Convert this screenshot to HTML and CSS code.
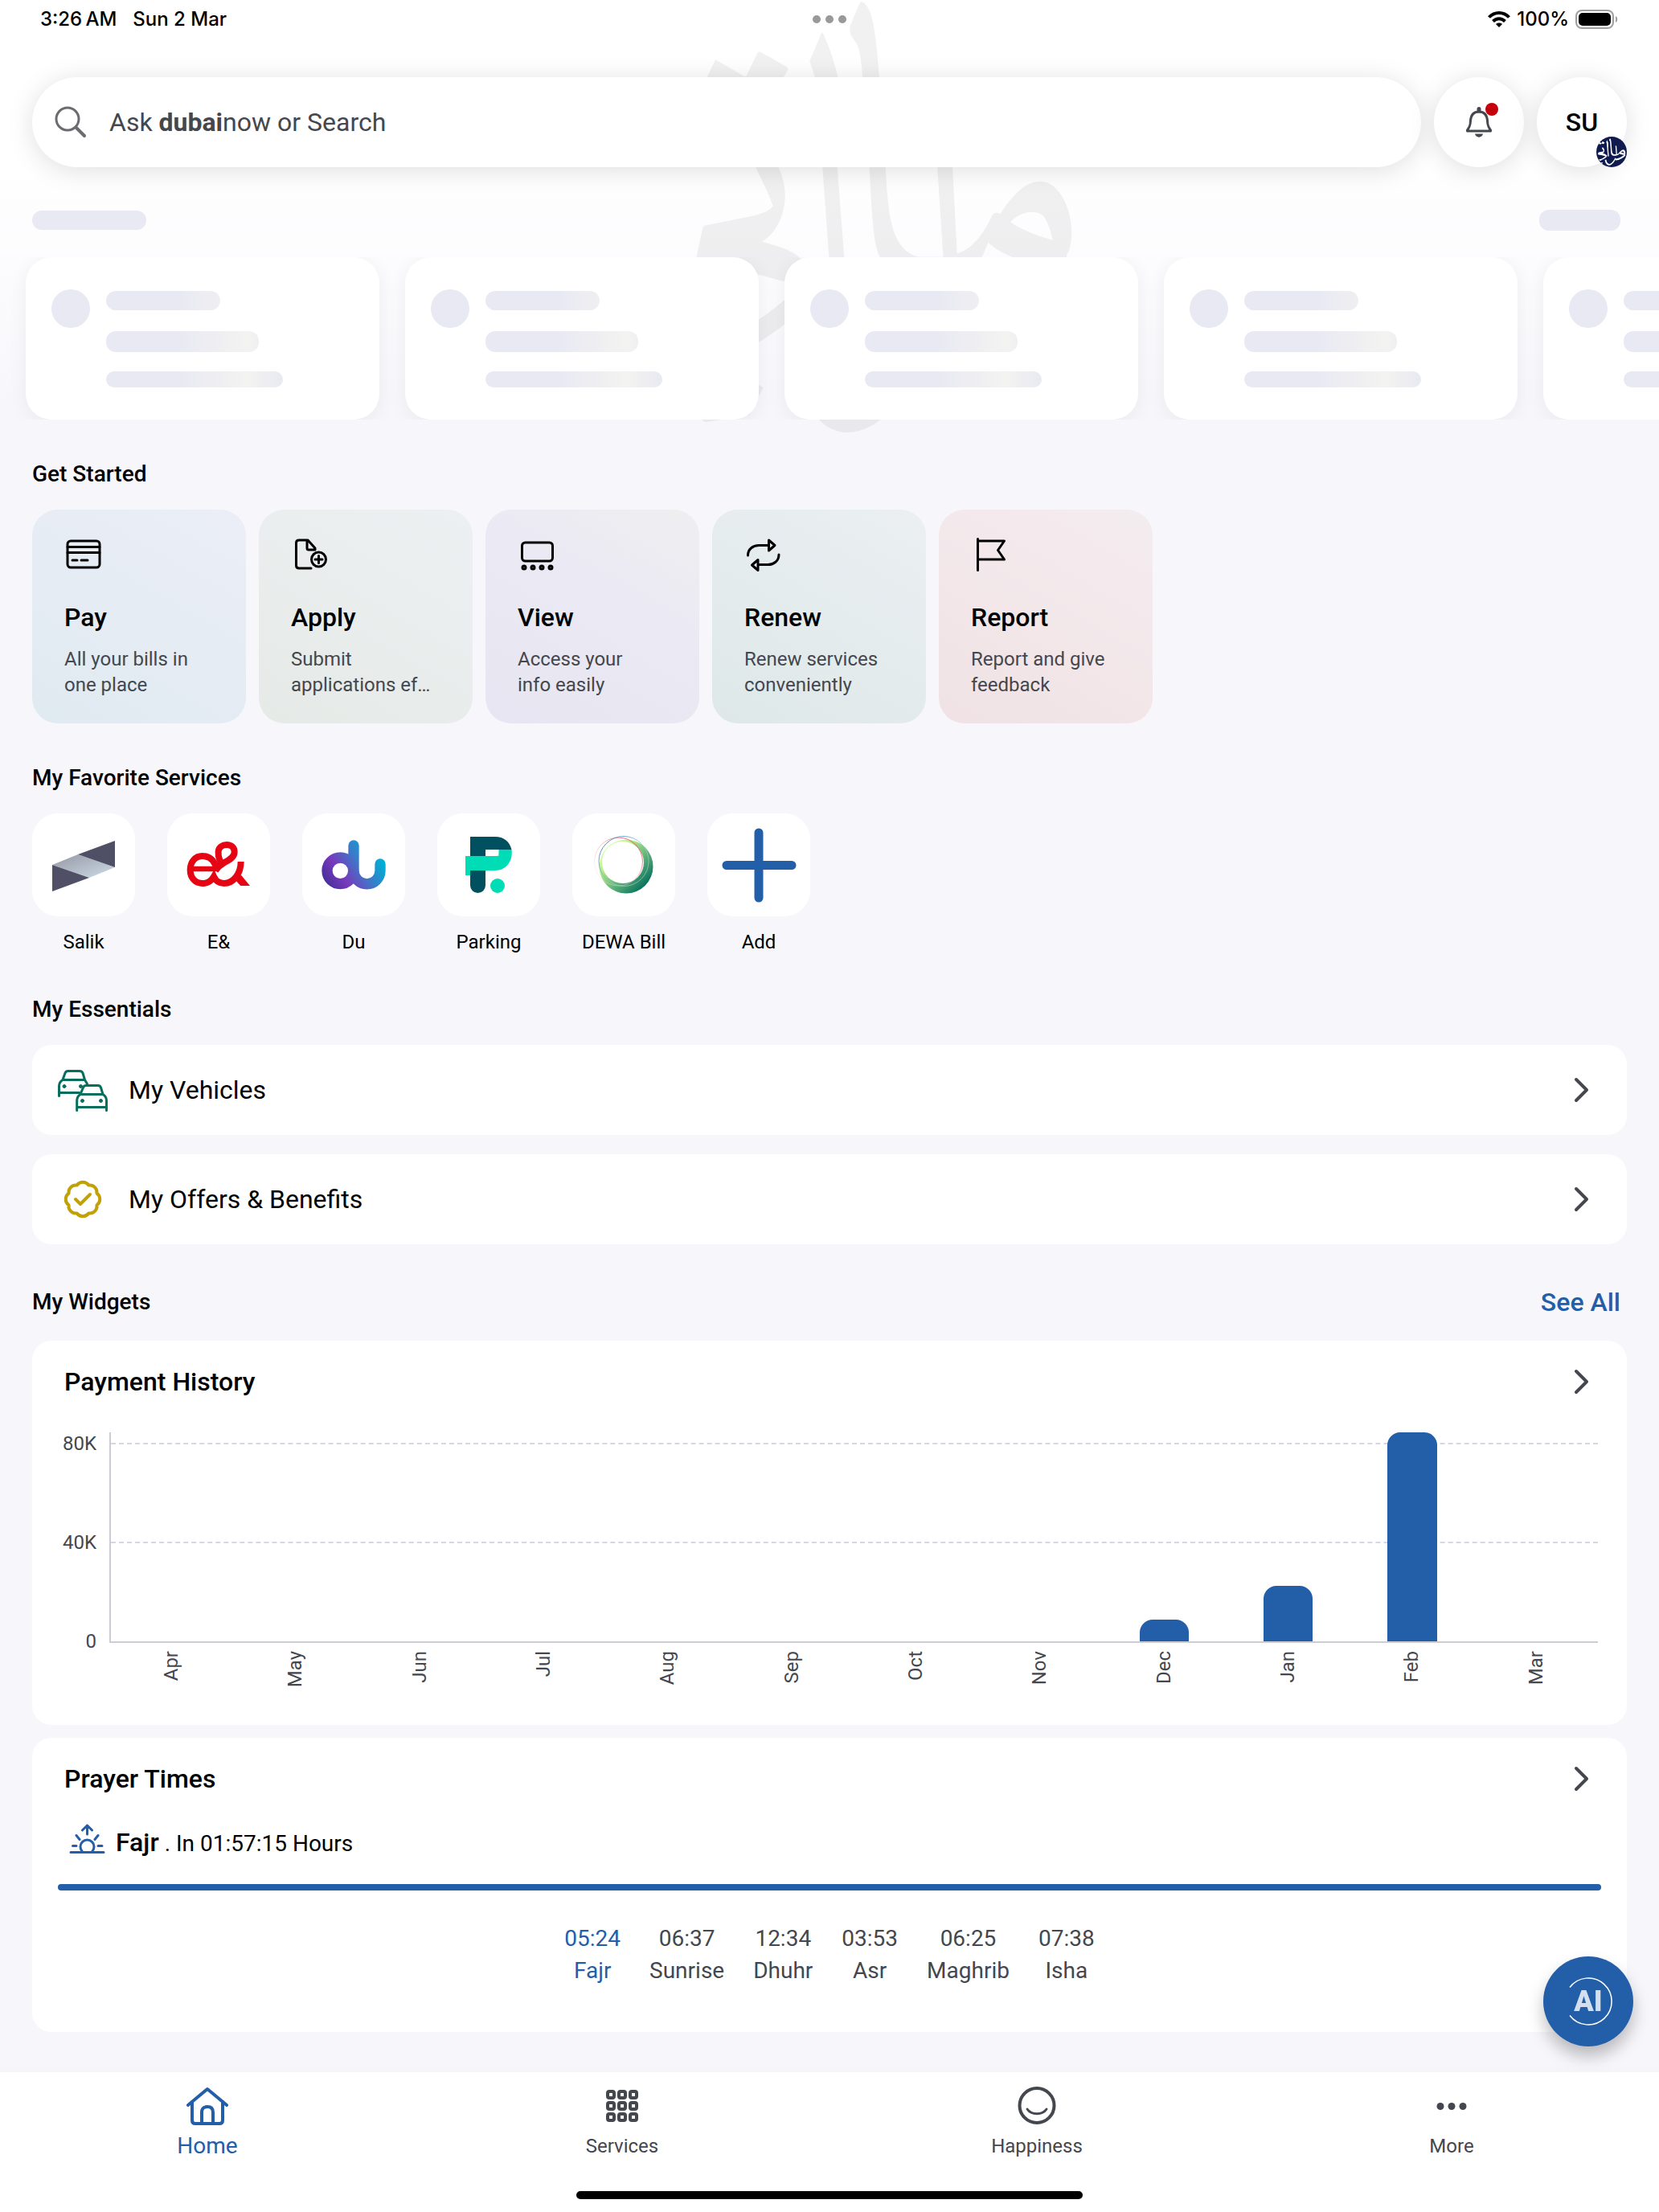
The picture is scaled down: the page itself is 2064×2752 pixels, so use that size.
FILE: index.html
```html
<!DOCTYPE html>
<html lang="en">
<head>
    <meta charset="UTF-8">
    <meta name="viewport" content="width=device-width, initial-scale=1.0">
    <title>Dubai Now</title>
    <link rel="stylesheet" href="styles.css">
</head>
<body>

    <!-- shared symbols -->
    <svg class="symbols" aria-hidden="true">
        <symbol id="maliati" viewBox="180 0 1200 1520" preserveAspectRatio="none">
            <path d="M271 208L358 265Q364 268 367 260L398 186Q402 177 410 182L488 233Q494 238 490 246L450 325L362 285L320 345L232 300Z"/>
            <path d="M594 115Q598 112 601 122C620 170 635 225 644 269L642 582L663 895L670 1010L622 1010L617 895L597 582L574 269L558 212Z"/>
            <path d="M712 7C725 3 742 30 750 75C762 140 766 220 770 269L789 582C795 700 800 780 825 835C845 875 870 893 895 895L965 895L947 582L940 400L985 440L993 582L1007 883C1050 870 1085 820 1110 760Q1120 730 1138 746C1170 690 1210 632 1260 632C1320 632 1356 730 1356 810C1356 850 1348 880 1338 895C1320 940 1240 930 1175 895C1150 885 1120 865 1102 845L1083 895C1050 960 900 990 850 970C810 960 785 930 772 895C752 850 748 760 740 582L719 269C716 210 710 170 700 150C688 130 678 120 681 90Z
                     M1170 773C1200 800 1260 825 1299 836C1295 815 1282 765 1268 750C1245 730 1200 735 1170 773Z" fill-rule="evenodd"/>
            <path d="M370 530C410 620 440 690 446 718C430 740 400 748 380 753L240 785Q234 787 232 795L213 895L240 920C300 925 400 955 480 980L560 1000L600 950L530 900C505 870 450 853 412 842C460 810 483 740 483 680C483 640 472 605 463 582L430 510Z"/>
            <path d="M250 1180C340 1170 440 1100 540 980L600 1010C520 1110 400 1200 300 1260Z"/>
            <path d="M400 1338L416 1350L375 1445L240 1470L200 1440L300 1360Z"/>
            <path d="M500 1200C520 1420 600 1506 672 1506C790 1506 900 1320 960 1120L920 1100C860 1280 780 1420 690 1430C620 1430 580 1350 560 1200Z"/>
            <path d="M940 1140C1080 1120 1220 1040 1338 880L1356 960C1260 1110 1120 1210 950 1230Z"/>
        </symbol>
        <symbol id="chevron" viewBox="0 0 48 48">
            <path d="M17 11L30 24L17 37" fill="none" stroke="#44474e" stroke-width="4" stroke-linecap="round" stroke-linejoin="round"/>
        </symbol>
    </svg>

    <div class="page">

        <svg class="watermark" aria-hidden="true"><use href="#maliati"/></svg>

        <div class="status-bar">
            <div class="status-left"><span>3:26&#8201;AM</span><span>Sun 2 Mar</span></div>
            <div class="status-dots"><i></i><i></i><i></i></div>
            <div class="status-right">
                <svg width="28" height="22" viewBox="0 0 28 22">
                    <g fill="none" stroke="#000" stroke-width="4">
                        <path d="M1.500 8.500C8.500 1 19.500 1 26.500 8.500"/>
                        <path d="M6.500 13.500C11 9 17 9 21.500 13.500"/>
                    </g>
                    <path d="M14 21L10 17C12 15 16 15 18 17Z"/>
                </svg>
                <span>100%</span>
                <svg width="54" height="24" viewBox="0 0 54 24">
                    <rect x="1" y="1" width="46" height="22" rx="7" fill="none" stroke="#a0a0a0" stroke-width="2"/>
                    <rect x="4" y="4" width="40" height="16" rx="5"/>
                    <path d="M50 8C53 9 53 15 50 16Z" fill="#a0a0a0"/>
                </svg>
            </div>
        </div>

        <header class="topbar">
            <form class="search">
                <svg width="48" height="48" viewBox="0 0 48 48" fill="none" stroke="#6b6c70" stroke-linecap="round">
                    <circle cx="20" cy="20" r="14" stroke-width="3"/>
                    <path d="M31 31L41 41" stroke-width="4"/>
                </svg>
                <div class="search-field">
                    <label for="search">Ask <b>dubai</b>now or Search</label>
                    <input type="text" id="search">
                </div>
            </form>
            <button class="round-button" aria-label="Notifications">
                <svg width="48" height="48" viewBox="0 0 48 48" fill="none" stroke="#44474e" stroke-width="3" stroke-linecap="round" stroke-linejoin="round">
                    <path d="M24 11C16.500 11 14 16 13.500 22C13.300 28 12.500 30 9.500 34V35H38.500V34C35.500 30 34.700 28 34.500 22C34 16 31.500 11 24 11Z"/>
                    <path d="M24 7.500V10" stroke-width="5"/>
                    <path d="M19 38.500H29C28 44 20 44 19 38.500Z" fill="#44474e" stroke="none"/>
                </svg>
                <span class="dot"></span>
            </button>
            <button class="round-button" aria-label="Profile">
                SU
                <span class="badge"><svg><use href="#maliati"/></svg></span>
            </button>
        </header>

        <div class="skeleton-head">
            <span class="bone bone-title"></span>
            <span class="bone bone-link"></span>
        </div>
        <div class="skeleton-cards">
            <div class="skeleton-card"><span class="bone-circle"></span><div class="bone-lines"><i></i><i></i><i></i></div></div>
            <div class="skeleton-card"><span class="bone-circle"></span><div class="bone-lines"><i></i><i></i><i></i></div></div>
            <div class="skeleton-card"><span class="bone-circle"></span><div class="bone-lines"><i></i><i></i><i></i></div></div>
            <div class="skeleton-card"><span class="bone-circle"></span><div class="bone-lines"><i></i><i></i><i></i></div></div>
            <div class="skeleton-card"><span class="bone-circle"></span><div class="bone-lines"><i></i><i></i><i></i></div></div>
        </div>

        <main>
            <section>
                <h2>Get Started</h2>
                <div class="actions">
                    <a href="#" class="action pay">
                        <svg viewBox="0 0 48 48">
                            <rect x="4" y="7" width="40" height="33" rx="4"/>
                            <path d="M4 14.500H44M4 21.500H44M10 31H16M21 31H29"/>
                        </svg>
                        <h3>Pay</h3>
                        <p>All your bills in<br>one place</p>
                    </a>
                    <a href="#" class="action apply">
                        <svg viewBox="0 0 48 48">
                            <path d="M25 41H10Q6.500 41 6.500 37.500V9.500Q6.500 6 10 6H21L30 16V18H22Q20 18 20 16V6"/>
                            <circle cx="34.500" cy="30" r="9"/>
                            <path d="M34.500 25.500V34.500M30 30H39"/>
                        </svg>
                        <h3>Apply</h3>
                        <p>Submit<br>applications ef…</p>
                    </a>
                    <a href="#" class="action view">
                        <svg viewBox="0 0 48 48">
                            <rect x="5.500" y="9" width="38" height="23" rx="4"/>
                            <circle cx="8" cy="40" r="2"/><circle cx="19" cy="40" r="2"/>
                            <circle cx="30" cy="40" r="2"/><circle cx="41" cy="40" r="2"/>
                        </svg>
                        <h3>View</h3>
                        <p>Access your<br>info easily</p>
                    </a>
                    <a href="#" class="action renew">
                        <svg viewBox="0 0 48 48">
                            <path d="M4.500 25C4.500 17 11 12.500 18 12.500H30M30.500 6V19L38 12.500Z"/>
                            <path d="M43 24C43 32 36.500 36.500 29.500 36.500H17.500M17 30.500V43.500L9.500 37Z"/>
                        </svg>
                        <h3>Renew</h3>
                        <p>Renew services<br>conveniently</p>
                    </a>
                    <a href="#" class="action report">
                        <svg viewBox="0 0 48 48">
                            <path d="M8.500 4.500V43.500M8.500 7H41.500L33.500 18.500L41.500 30H8.500"/>
                        </svg>
                        <h3>Report</h3>
                        <p>Report and give<br>feedback</p>
                    </a>
                </div>
            </section>

            <section>
                <h2>My Favorite Services</h2>
                <div class="favorites">
                    <a href="#" class="favorite">
                        <svg viewBox="0 0 128 128">
                            <defs>
                                <linearGradient id="salik" x1="0" y1="0" x2="1" y2="1">
                                    <stop offset="0" stop-color="#9498a4"/>
                                    <stop offset="1" stop-color="#cddbe6"/>
                                </linearGradient>
                            </defs>
                            <path d="M25 64L57 51L103 67L71 80Z" fill="url(#salik)"/>
                            <path d="M25 64L71 80L25 97ZM57 51L103 34V67Z" fill="#4f5065"/>
                        </svg>
                        <span>Salik</span>
                    </a>
                    <a href="#" class="favorite">
                        <svg viewBox="624 216 384 384">
                            <g fill="none" stroke="#e60613" stroke-width="24">
                                <path d="M716 423H812" stroke-width="20"/>
                                <path d="M808 424C802 388 778 375 755 375C728 375 710 398 710 427C710 458 730 477 756 477C775 477 788 470 798 452C806 470 820 477 836 477C872 477 899 440 899 396"/>
                                <path d="M828 402C812 382 815 366 815 357C817 342 830 333 846 333C864 333 875 344 875 360C875 380 855 390 838 399C822 408 812 418 804 430"/>
                            </g>
                            <path d="M785 449H811V470H785ZM876 462L898 486H933L900 446Z" fill="#e60613"/>
                        </svg>
                        <span>E&amp;</span>
                    </a>
                    <a href="#" class="favorite">
                        <svg viewBox="1128 216 384 384">
                            <defs>
                                <linearGradient id="du" gradientUnits="userSpaceOnUse" x1="1225" y1="490" x2="1410" y2="370">
                                    <stop offset="0" stop-color="#47309b"/>
                                    <stop offset=".3" stop-color="#7839bd"/>
                                    <stop offset=".65" stop-color="#3d79c8"/>
                                    <stop offset="1" stop-color="#00afd6"/>
                                </linearGradient>
                            </defs>
                            <g fill="none" stroke="url(#du)" stroke-width="40" stroke-linecap="round">
                                <circle cx="1270" cy="430" r="49"/>
                                <path d="M1320 336V430A49 49 0 0 0 1419 430V405"/>
                            </g>
                        </svg>
                        <span>Du</span>
                    </a>
                    <a href="#" class="favorite">
                        <svg viewBox="0 0 128 128">
                            <path d="M41 29H72C83 29 90 35 92.500 45H76.500L72 45H60V89.500A9.500 9.500 0 0 1 41 89.500Z" fill="#00505f"/>
                            <path d="M35 53H72Q76.500 53 76.500 49V45H92.500C94.500 60 85 71 72 71H41V77H35Z" fill="#00dcb6"/>
                            <path d="M41 71H60V76H41Z" fill="#00505f"/>
                            <path d="M60 45H70Q76.500 45 76.500 52.700H60Z" fill="#fff"/>
                            <circle cx="75" cy="90" r="9" fill="#00dcb6"/>
                        </svg>
                        <span>Parking</span>
                    </a>
                    <a href="#" class="favorite">
                        <svg viewBox="0 0 128 128">
                            <defs>
                                <linearGradient id="dewa" x1=".1" y1=".1" x2=".85" y2=".85">
                                    <stop offset="0" stop-color="#e9ffd0"/>
                                    <stop offset=".25" stop-color="#c0f288"/>
                                    <stop offset=".6" stop-color="#68b97b"/>
                                    <stop offset="1" stop-color="#0b7460"/>
                                </linearGradient>
                                <linearGradient id="dewa-red" x1="0" y1="1" x2="1" y2="0">
                                    <stop offset=".2" stop-color="#fbdbe2" stop-opacity=".4"/>
                                    <stop offset="1" stop-color="#e8304f"/>
                                </linearGradient>
                                <linearGradient id="dewa-blue" x1="0" y1="0" x2="1" y2="1">
                                    <stop offset="0" stop-color="#1775bd"/>
                                    <stop offset=".8" stop-color="#c9e6dc" stop-opacity=".5"/>
                                </linearGradient>
                            </defs>
                            <circle cx="67" cy="66" r="33.500" fill="url(#dewa)"/>
                            <circle cx="63" cy="61" r="26" fill="#fff"/>
                            <circle cx="57.500" cy="60" r="30" fill="none" stroke="url(#dewa-red)"/>
                            <circle cx="64" cy="59.500" r="31" fill="none" stroke="url(#dewa-blue)"/>
                        </svg>
                        <span>DEWA Bill</span>
                    </a>
                    <a href="#" class="favorite">
                        <svg viewBox="0 0 128 128">
                            <path d="M64 24V105M24 64.500H105" stroke="#235ea9" stroke-width="11" stroke-linecap="round"/>
                        </svg>
                        <span>Add</span>
                    </a>
                </div>
            </section>

            <section>
                <h2>My Essentials</h2>
                <div class="essentials">
                    <a href="#" class="essential">
                        <svg class="essential-icon" viewBox="0 0 64 64" fill="none" stroke="#066e5c" stroke-width="3" stroke-linecap="round" stroke-linejoin="round">
                            <path d="M6 19.500L9 11Q10 8.500 12.500 8.500H27Q30 8.500 31 11L33.500 19.500H6C3 21.500 1.500 24 1.500 27V39.500M33.500 19.500L36.500 24.500M1.500 35.500H27"/>
                            <path d="M28 37.500L31.500 29Q32.500 26.500 35 26.500H50Q52.500 26.500 53.500 29L56 37.500H28C25 39.500 23.700 42 23.700 45V57.500M56 37.500C59 39.500 60.500 42 60.500 45V57.500M23.700 53.500H60.500"/>
                            <g fill="#066e5c" stroke-width="1">
                                <circle cx="8" cy="27.500" r="2"/><circle cx="28.500" cy="27.500" r="2"/>
                                <circle cx="30.500" cy="45.500" r="2"/><circle cx="53.500" cy="45.500" r="2"/>
                            </g>
                        </svg>
                        <span>My Vehicles</span>
                        <svg class="chevron"><use href="#chevron"/></svg>
                    </a>
                    <a href="#" class="essential">
                        <svg class="essential-icon" viewBox="0 0 64 64" fill="none" stroke="#c1a106" stroke-width="4" stroke-linecap="round" stroke-linejoin="round">
                            <path d="M48.500 39.300A9 9 0 0 1 38.300 49.500A9 9 0 0 1 23.700 49.500A9 9 0 0 1 13.500 39.300A9 9 0 0 1 13.500 24.700A9 9 0 0 1 23.700 14.500A9 9 0 0 1 38.300 14.500A9 9 0 0 1 48.500 24.700A9 9 0 0 1 48.500 39.300Z"/>
                            <path d="M22 32L28 38L40 26"/>
                        </svg>
                        <span>My Offers &amp; Benefits</span>
                        <svg class="chevron"><use href="#chevron"/></svg>
                    </a>
                </div>
            </section>

            <section class="widgets">
                <div class="section-head">
                    <h2>My Widgets</h2>
                    <a href="#">See All</a>
                </div>

                <div class="widget">
                    <a href="#" class="widget-head">
                        <h3>Payment History</h3>
                        <svg class="chevron"><use href="#chevron"/></svg>
                    </a>
                    <div class="chart">
                        <div class="y-axis"><span>80K</span><span>40K</span><span>0</span></div>
                        <div class="chart-body">
                            <div class="plot">
                                <span class="grid-line line-80"></span>
                                <span class="grid-line line-40"></span>
                                <i></i><i></i><i></i><i></i><i></i><i></i><i></i><i></i>
                                <i class="bar" style="height: 27px"></i>
                                <i class="bar" style="height: 69px"></i>
                                <i class="bar" style="height: 260px"></i>
                                <i></i>
                            </div>
                            <div class="months">
                                <span>Apr</span><span>May</span><span>Jun</span><span>Jul</span>
                                <span>Aug</span><span>Sep</span><span>Oct</span><span>Nov</span>
                                <span>Dec</span><span>Jan</span><span>Feb</span><span>Mar</span>
                            </div>
                        </div>
                    </div>
                </div>

                <div class="widget">
                    <a href="#" class="widget-head">
                        <h3>Prayer Times</h3>
                        <svg class="chevron"><use href="#chevron"/></svg>
                    </a>
                    <div class="next-prayer">
                        <svg width="48" height="48" viewBox="0 0 48 48" fill="none" stroke="#235ea9" stroke-width="3" stroke-linecap="round" stroke-linejoin="round">
                            <path d="M4 40.500H45M18 39A8.500 8.500 0 1 1 31 39M6.500 32.500H11M38 32.500H43M11 19.500L15 24.500M38 19.500L34 24.500M24.500 18V7M18.500 13L24.500 7L30.500 13"/>
                        </svg>
                        <p><b>Fajr</b> . In 01:57:15 Hours</p>
                    </div>
                    <progress value="100" max="100" aria-label="Time to next prayer"></progress>
                    <ul class="prayers">
                        <li class="current"><span>05:24</span><span>Fajr</span></li>
                        <li><span>06:37</span><span>Sunrise</span></li>
                        <li><span>12:34</span><span>Dhuhr</span></li>
                        <li><span>03:53</span><span>Asr</span></li>
                        <li><span>06:25</span><span>Maghrib</span></li>
                        <li><span>07:38</span><span>Isha</span></li>
                    </ul>
                </div>
            </section>
        </main>

        <nav>
            <div class="tabs">
                <a href="#" class="tab active">
                    <svg viewBox="0 0 56 48" fill="none" stroke="#235ea9" stroke-width="4" stroke-linecap="round" stroke-linejoin="round">
                        <path d="M4 23L28 3L52 23"/>
                        <path d="M9 19V42Q9 46 13 46H43Q47 46 47 42V19"/>
                        <path d="M21 46V32Q21 25 28 25Q35 25 35 32V46"/>
                    </svg>
                    <span>Home</span>
                </a>
                <a href="#" class="tab">
                    <svg viewBox="0 0 48 48" fill="none" stroke="#44474e" stroke-width="4">
                        <rect x="6" y="6" width="8" height="8" rx="2"/><rect x="20" y="6" width="8" height="8" rx="2"/><rect x="34" y="6" width="8" height="8" rx="2"/>
                        <rect x="6" y="20" width="8" height="8" rx="2"/><rect x="20" y="20" width="8" height="8" rx="2"/><rect x="34" y="20" width="8" height="8" rx="2"/>
                        <rect x="6" y="34" width="8" height="8" rx="2"/><rect x="20" y="34" width="8" height="8" rx="2"/><rect x="34" y="34" width="8" height="8" rx="2"/>
                    </svg>
                    <span>Services</span>
                </a>
                <a href="#" class="tab">
                    <svg viewBox="0 0 48 48" fill="none" stroke="#44474e" stroke-linecap="round">
                        <circle cx="24" cy="23.500" r="21.500" stroke-width="4"/>
                        <path d="M12 28C17 35.500 31 35.500 36 28" stroke-width="3"/>
                    </svg>
                    <span>Happiness</span>
                </a>
                <a href="#" class="tab">
                    <svg viewBox="0 0 48 48" fill="#44474e">
                        <circle cx="10" cy="24.500" r="4.500"/><circle cx="24" cy="24.500" r="4.500"/><circle cx="38" cy="24.500" r="4.500"/>
                    </svg>
                    <span>More</span>
                </a>
            </div>
            <div class="home-indicator"></div>
        </nav>

        <button class="ai-button" aria-label="AI assistant">
            <svg width="64" height="64" viewBox="0 0 64 64" fill="none" stroke="#fff" stroke-width="1.500">
                <path d="M9 14.500A29 29 0 1 1 9 49.500"/>
            </svg>
            <span>AI</span>
        </button>
    </div>

</body>
</html>
```
FILE: styles.css
```css
* {
    box-sizing: border-box;
}

body {
    margin: 0;
    font-family: Roboto, "Liberation Sans", sans-serif;
    font-size: 28px;
    line-height: 40px;
    color: #000;
    background-color: #f7f6fb;
}

h2, h3, p, ul {
    margin: 0;
    padding: 0;
}

h2 {
    font-size: 28px;
    line-height: 40px;
    font-weight: 500;
}

h3 {
    font-size: 32px;
    line-height: 40px;
    font-weight: 500;
}

a {
    color: inherit;
    text-decoration: none;
}

button {
    font-family: inherit;
    border: none;
    padding: 0;
    cursor: pointer;
}

svg {
    display: block;
    flex-shrink: 0;
}

.symbols {
    position: absolute;
    width: 0;
    height: 0;
}

.page {
    position: relative;
    display: flex;
    flex-direction: column;
    min-height: 100vh;
    overflow: hidden;
    background: linear-gradient(#fff 200px, #f7f6fb 520px);
}

/* calligraphy behind the header */
.watermark {
    position: absolute;
    top: 0;
    left: calc(50% - 179px);
    width: 490px;
    height: 543px;
    opacity: 0.05;
}

.page > * {
    z-index: 1;
}

.page > .watermark {
    z-index: 0;
}

/* status bar */
.status-bar {
    display: grid;
    grid-template-columns: 1fr auto 1fr;
    align-items: center;
    height: 48px;
    padding: 0 50px;
    font-family: Inter, Roboto, sans-serif;
    font-size: 24px;
    font-weight: 500;
}

.status-left, .status-right {
    display: flex;
    align-items: center;
    gap: 20px;
}

.status-right {
    justify-content: flex-end;
    gap: 8px;
}

.status-dots {
    display: flex;
    gap: 6px;
}

.status-dots i {
    width: 10px;
    height: 10px;
    border-radius: 50%;
    background-color: #999;
}

/* search row */
.topbar {
    display: flex;
    gap: 16px;
    padding: 48px 40px 0;
}

.search, .round-button {
    height: 112px;
    border-radius: 56px;
    background-color: #fff;
    box-shadow: 0 4px 32px rgba(0, 0, 0, 0.13);
}

.search {
    flex: 1;
    display: flex;
    align-items: center;
    gap: 24px;
    padding: 0 40px 0 24px;
}

.search-field {
    flex: 1;
    display: grid;
    align-items: center;
}

.search-field label, .search-field input {
    grid-area: 1 / 1;
    font-family: inherit;
    font-size: 32px;
    line-height: 40px;
    color: #44474e;
}

.search-field input {
    width: 100%;
    height: 112px;
    padding: 0;
    border: none;
    outline: none;
    background: transparent;
}

.round-button {
    position: relative;
    display: flex;
    align-items: center;
    justify-content: center;
    width: 112px;
    font-size: 32px;
    font-weight: 500;
    color: #000;
}

.dot {
    position: absolute;
    top: 32px;
    right: 32px;
    width: 16px;
    height: 16px;
    border-radius: 50%;
    background-color: #c4000c;
}

.badge {
    position: absolute;
    right: 0;
    bottom: 0;
    display: flex;
    align-items: center;
    justify-content: center;
    width: 38px;
    height: 38px;
    border-radius: 50%;
    background-color: #0f1a4f;
    overflow: hidden;
}

.badge svg {
    width: 36px;
    height: 34px;
    fill: #fff;
}

/* loading placeholders */
.skeleton-head {
    display: flex;
    align-items: center;
    justify-content: space-between;
    height: 28px;
    margin: 52px 0 32px;
    padding: 0 48px 0 40px;
}

.bone {
    border-radius: 12px;
    background-color: #e9e9f3;
}

.bone-title {
    width: 142px;
    height: 24px;
}

.bone-link {
    width: 101px;
    height: 26px;
}

.skeleton-cards {
    display: flex;
    gap: 32px;
    padding: 0 32px;
    overflow: hidden;
}

.skeleton-card {
    flex: 0 0 440px;
    display: flex;
    gap: 20px;
    height: 202px;
    padding: 40px 32px;
    border-radius: 32px;
    background-color: #fff;
    box-shadow: 0 4px 24px rgba(0, 0, 0, 0.06);
}

.bone-circle {
    width: 48px;
    height: 48px;
    border-radius: 50%;
    background-color: #e9e9f3;
}

.bone-lines i {
    display: block;
    width: 142px;
    height: 24px;
    margin-top: 2px;
    border-radius: 12px;
    background: linear-gradient(90deg, #e9e9f3 90px, #f3f3f1 176px, #e9e9f3 220px);
}

.bone-lines i:nth-child(2) {
    width: 190px;
    height: 26px;
    margin-top: 26px;
}

.bone-lines i:nth-child(3) {
    width: 220px;
    height: 20px;
    margin-top: 24px;
}

/* sections */
main {
    display: flex;
    flex-direction: column;
    gap: 48px;
    padding: 48px 40px 50px;
}

section {
    display: flex;
    flex-direction: column;
    gap: 24px;
}

.actions {
    display: flex;
    gap: 16px;
}

.action {
    width: 266px;
    padding: 32px 40px;
    border-radius: 32px;
}

.action svg {
    width: 48px;
    height: 48px;
    fill: none;
    stroke: #000;
    stroke-width: 3;
    stroke-linecap: round;
    stroke-linejoin: round;
}

.action h3 {
    margin: 34px 0 16px;
}

.action p {
    font-size: 24px;
    line-height: 32px;
    white-space: nowrap;
    color: #44474e;
}

.pay {
    background: linear-gradient(30deg, #e0eaf1, #ebeef7);
}

.apply {
    background: linear-gradient(30deg, #e5eae7, #edf0f2);
}

.view {
    background: linear-gradient(30deg, #e7e5f1, #ebe9f3 60%, #efeff1);
}

.renew {
    background: linear-gradient(30deg, #dee8e9, #ebeff2);
}

.report {
    background: linear-gradient(30deg, #f0e2e4, #f4eaed 80%, #f2edef);
}

.favorites {
    display: flex;
    gap: 40px;
}

.favorite {
    display: flex;
    flex-direction: column;
    align-items: center;
    gap: 16px;
    width: 128px;
    font-size: 24px;
    line-height: 32px;
}

.favorite svg {
    width: 128px;
    height: 128px;
    border-radius: 32px;
    background-color: #fff;
}

.essentials {
    display: flex;
    flex-direction: column;
    gap: 24px;
}

.essential {
    display: flex;
    align-items: center;
    gap: 24px;
    height: 112px;
    padding: 0 32px;
    border-radius: 24px;
    background-color: #fff;
    font-size: 32px;
}

.essential-icon {
    width: 64px;
    height: 64px;
}

.chevron {
    width: 48px;
    height: 48px;
    margin-left: auto;
}

/* widgets */
.widgets {
    gap: 16px;
    margin-top: 4px;
}

.section-head {
    display: flex;
    align-items: center;
    justify-content: space-between;
    margin-bottom: 12px;
    padding-right: 8px;
}

.section-head a {
    font-size: 32px;
    font-weight: 500;
    color: #235ea9;
}

.widget {
    border-radius: 24px;
    background-color: #fff;
}

.widget-head {
    display: flex;
    align-items: center;
    height: 102px;
    padding: 0 32px 0 40px;
}

.chart {
    display: flex;
    gap: 16px;
    padding: 10px 36px 0 0;
    font-size: 24px;
    line-height: 32px;
    color: #44474e;
}

.y-axis {
    display: flex;
    flex-direction: column;
    justify-content: space-between;
    width: 80px;
    height: 278px;
    text-align: right;
}

.chart-body {
    flex: 1;
    padding-top: 2px;
}

.plot {
    position: relative;
    display: grid;
    grid-template-columns: repeat(12, 1fr);
    align-items: end;
    justify-items: center;
    height: 262px;
    border-left: 2px solid #ccccd6;
    border-bottom: 2px solid #ccccd6;
}

.grid-line {
    position: absolute;
    left: 0;
    right: 0;
    border-top: 2px dashed #d6d6e4;
}

.line-80 {
    top: 13px;
}

.line-40 {
    top: 136px;
}

.bar {
    position: relative;
    width: 40%;
    border-radius: 16px 16px 0 0;
    background-color: #235ea9;
}

.months {
    display: grid;
    grid-template-columns: repeat(12, 1fr);
    justify-items: center;
    align-items: start;
    height: 102px;
    padding-top: 10px;
}

.months span {
    writing-mode: vertical-rl;
    transform: rotate(180deg);
}

.next-prayer {
    display: flex;
    gap: 12px;
    height: 56px;
    padding-left: 44px;
    margin-bottom: 24px;
    line-height: 56px;
}

.next-prayer b {
    font-size: 32px;
    font-weight: 500;
}

progress {
    display: block;
    width: calc(100% - 64px);
    height: 8px;
    margin: 0 32px;
    border: none;
    appearance: none;
}

progress::-webkit-progress-bar {
    border-radius: 4px;
    background-color: #e9e9f3;
}

progress::-webkit-progress-value {
    border-radius: 4px;
    background-color: #235ea9;
}

.prayers {
    display: flex;
    justify-content: center;
    gap: 36px;
    padding: 40px 0 56px;
    list-style: none;
    color: #44474e;
}

.prayers li {
    display: flex;
    flex-direction: column;
    align-items: center;
}

.prayers .current {
    color: #235ea9;
}

/* bottom navigation */
nav {
    margin-top: auto;
    height: 174px;
    padding-top: 18px;
    background-color: #fff;
    box-shadow: 0 -2px 12px rgba(0, 0, 0, 0.02);
}

.tabs {
    display: grid;
    grid-template-columns: repeat(4, 1fr);
    height: 130px;
}

.tab {
    display: flex;
    flex-direction: column;
    align-items: center;
    gap: 10px;
    font-size: 24px;
    line-height: 32px;
    color: #44474e;
}

.tab svg {
    height: 48px;
}

.tab.active {
    font-size: 28px;
    color: #235ea9;
}

.home-indicator {
    width: 630px;
    height: 10px;
    margin: 0 auto;
    border-radius: 5px;
    background-color: #000;
}

.ai-button {
    position: fixed;
    right: 32px;
    bottom: 206px;
    display: grid;
    place-items: center;
    width: 112px;
    height: 112px;
    border-radius: 50%;
    background-color: #235ea9;
    box-shadow: 0 12px 20px rgba(0, 0, 0, 0.25);
}

.ai-button svg, .ai-button span {
    grid-area: 1 / 1;
}

.ai-button span {
    font-size: 36px;
    font-weight: 900;
    color: #d3dfee;
}
```
